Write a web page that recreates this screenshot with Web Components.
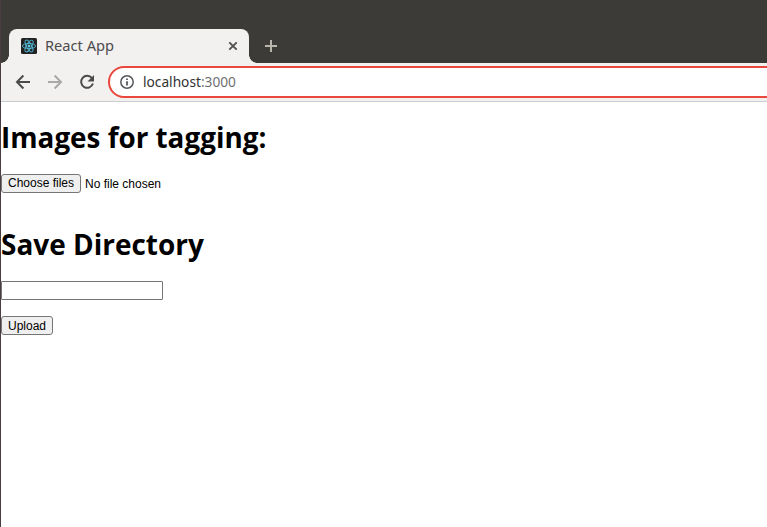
<!DOCTYPE html>
<html lang="en"><head><meta charset="utf-8"><title>React App</title>
<style>html,body{margin:0;height:100%;overflow:hidden;background:#fff}</style></head>
<body>
<browser-window>
  <browser-tab slot="tabs">React App</browser-tab>
  <address-bar slot="toolbar" host="localhost" port=":3000"></address-bar>
  <upload-page></upload-page>
</browser-window>
<script>
const define=(name,html,init)=>customElements.define(name,class extends HTMLElement{
  connectedCallback(){
    if(this.shadowRoot)return;
    const t=document.createElement('template');t.innerHTML=html;
    this.attachShadow({mode:'open'}).append(t.content.cloneNode(true));
    if(init)init(this,this.shadowRoot);
  }
});

// Scales its text horizontally to the width given in the "w" attribute.
define('fit-text',`<style>:host{display:block;white-space:nowrap;flex:none}span{display:inline-block;transform-origin:0 50%}</style><span><slot></slot></span>`,
(el,root)=>{
  const w=+el.getAttribute('w'),s=root.querySelector('span');
  el.style.width=w+'px';
  requestAnimationFrame(()=>{s.style.transform=`scaleX(${w/s.offsetWidth})`});
});

define('browser-window',`<style>
:host{display:flex;flex-direction:column;box-sizing:border-box;width:767px;height:527px;border-left:1px solid #493c42;overflow:hidden;font-family:"Noto Sans",sans-serif}
.strip{height:63px;flex:none;background:#3c3b37;display:flex;align-items:flex-end;box-sizing:border-box;padding-left:8px}
.plus{width:14px;height:14px;margin:0 0 10px 15px}
.bar{height:38px;flex:none;background:#f2f1f0;border-bottom:1px solid #cbcccd;display:flex;align-items:flex-start}
main{flex:1;background:#fff}
</style>
<div class="strip"><slot name="tabs"></slot><svg class="plus" viewBox="0 0 14 14"><path d="M7 1v12M1 7h12" stroke="#b9b6ac" stroke-width="2"/></svg></div>
<div class="bar"><slot name="toolbar"></slot></div><main><slot></slot></main>`);

define('browser-tab',`<style>
:host{display:flex;position:relative;align-items:center;box-sizing:border-box;width:240px;height:34px;padding:0 11px 0 12px;background:#f2f1f0;border-radius:8px 8px 0 0;font-size:14px;color:#4c4c4c}
:host::before,:host::after{content:"";position:absolute;bottom:0;width:8px;height:8px}
:host::before{left:-8px;background:radial-gradient(circle at 0 0,transparent 7.5px,#f2f1f0 8px)}
:host::after{right:-8px;background:radial-gradient(circle at 100% 0,transparent 7.5px,#f2f1f0 8px)}
.logo{width:16px;height:16px;margin-right:8px}
fit-text{padding-bottom:2px}
.x{width:10px;height:10px;margin-left:auto}
</style>
<svg class="logo" viewBox="0 0 16 16"><rect width="16" height="16" rx="1.5" fill="#222222"/><g fill="none" stroke="#50b4d0" stroke-width=".9"><ellipse cx="8" cy="8" rx="6.6" ry="2.6"/><ellipse cx="8" cy="8" rx="6.6" ry="2.6" transform="rotate(60 8 8)"/><ellipse cx="8" cy="8" rx="6.6" ry="2.6" transform="rotate(120 8 8)"/></g><circle cx="8" cy="8" r="1.5" fill="#59c5e3"/></svg>
<fit-text w="69"><slot></slot></fit-text>
<svg class="x" viewBox="0 0 10 10"><path d="M1.3 1.3l7.4 7.4M8.7 1.3l-7.4 7.4" stroke="#505050" stroke-width="1.9"/></svg>`);

define('address-bar',`<style>
:host{display:flex;width:766px;padding-top:3px;box-sizing:border-box;font-size:14px}
nav{display:flex;flex:none;width:107px;height:32px;align-items:center;box-sizing:border-box;padding-left:14px;gap:16px}
nav svg{width:16px;height:16px;flex:none}
.field{width:720px;height:32px;box-sizing:border-box;border:2px solid #ea483d;border-radius:16px;background:#fff;display:flex;align-items:center;padding-left:10px;flex:none;color:#333}
.field svg{width:14px;height:14px;margin-right:9px}
.field fit-text{padding-bottom:2px}
.port{color:#707070}
</style>
<nav>
<svg viewBox="0 0 16 16" fill="none" stroke="#4b4b4b" stroke-width="2"><path d="M15 8H2.5M8.4 1.5L2 8l6.4 6.5"/></svg>
<svg viewBox="0 0 16 16" fill="none" stroke="#aaa9a7" stroke-width="2"><path d="M1 8h12.500M7.600 1.500L14 8l-6.400 6.500"/></svg>
<svg viewBox="0 0 16 16"><path d="M12.900 4.100A6 6 0 1 0 13.900 9.500" fill="none" stroke="#4b4b4b" stroke-width="2"/><path d="M15 1v6.500H8.500z" fill="#4b4b4b"/></svg>
</nav>
<div class="field"><svg viewBox="0 0 14 14"><circle cx="7" cy="7" r="6.200" fill="none" stroke="#55585c" stroke-width="1.500"/><path d="M7 6.200V10.500M7 3.400v1.600" stroke="#55585c" stroke-width="1.800"/></svg>
<fit-text w="93"><span class="host"></span><span class="port"></span></fit-text></div>`,
(el,root)=>{root.querySelector('.host').textContent=el.getAttribute('host');root.querySelector('.port').textContent=el.getAttribute('port')});

define('form-button',`<style>:host{display:block;flex:none}
button{display:block;box-sizing:border-box;width:100%;height:19px;margin:0;padding:0 0 var(--lift,0px);border:1px solid #767676;border-radius:3px;background:#efefef;color:#000;font:12px/var(--line,16px) "Liberation Sans",sans-serif;white-space:nowrap}</style><button><slot></slot></button>`);

define('upload-page',`<style>
:host{display:flex;flex-direction:column;align-items:flex-start;padding-top:14px}
h1{margin:0;height:42px;font:700 29px/42px "Open Sans","Noto Sans",sans-serif;color:#000}
.file{display:flex;align-items:center;gap:4px;margin:16px 0 30px;height:19px;font:12px/19px "Liberation Sans",sans-serif}
.file span{padding-top:1px}
input{display:block;box-sizing:border-box;width:162px;height:19px;margin:16px 0;padding:1px 2px;border:1px solid #767676;border-radius:1px;background:#fff}
</style>
<h1><fit-text w="265">Images for tagging:</fit-text></h1>
<div class="file"><form-button style="width:80px;--lift:2px;--line:17px">Choose files</form-button><span>No file chosen</span></div>
<h1><fit-text w="202.500">Save Directory</fit-text></h1>
<input type="text" aria-label="Save Directory">
<form-button style="width:52px">Upload</form-button>`);
</script>
</body></html>
